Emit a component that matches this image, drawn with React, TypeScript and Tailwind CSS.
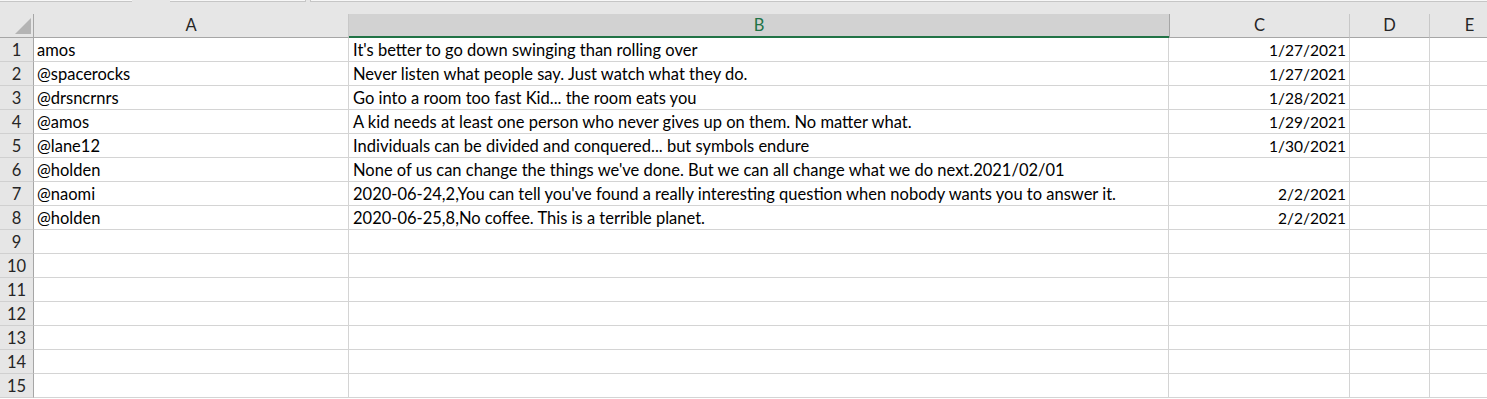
import React from "react";

const rows: { a: string; b: string; c: string }[] = [
  { a: "amos", b: "It's better to go down swinging than rolling over", c: "1/27/2021" },
  { a: "@spacerocks", b: "Never listen what people say. Just watch what they do.", c: "1/27/2021" },
  { a: "@drsncrnrs", b: "Go into a room too fast Kid... the room eats you", c: "1/28/2021" },
  { a: "@amos", b: "A kid needs at least one person who never gives up on them. No matter what.", c: "1/29/2021" },
  { a: "@lane12", b: "Individuals can be divided and conquered... but symbols endure", c: "1/30/2021" },
  { a: "@holden", b: "None of us can change the things we've done. But we can all change what we do next.2021/02/01", c: "" },
  { a: "@naomi", b: "2020-06-24,2,You can tell you've found a really interesting question when nobody wants you to answer it.", c: "2/2/2021" },
  { a: "@holden", b: "2020-06-25,8,No coffee. This is a terrible planet.", c: "2/2/2021" },
];

const allRows = Array.from({ length: 15 }, (_, i) => rows[i] ?? { a: "", b: "", c: "" });

export default function App() {
  return (
    <div
      className="w-[1487px] h-[399px] overflow-hidden bg-white text-[15px] text-black"
      style={{ fontFamily: "Lato, 'Liberation Sans', sans-serif" }}
    >
      {/* top strip */}
      <div className="flex h-[2px] bg-[#e6e6e6]">
        <div className="w-[132px] h-[2px] bg-[#f7f7f7] border-b border-[#c6c6c6]" />
        <div className="w-[38px] h-[2px]" />
        <div className="w-[136px] h-[2px] bg-[#f7f7f7] border-b border-r border-[#c6c6c6]" />
        <div className="w-[4px] h-[2px]" />
        <div className="flex-1 h-[2px] bg-[#f7f7f7] border-b border-l border-[#c6c6c6]" />
      </div>
      {/* header area */}
      <div className="bg-[#e6e6e6]">
        <div className="h-[12px]" />
        <div className="flex h-[24px] text-[16.5px]">
          <div className="w-[34px] shrink-0 h-[24px] border-r border-b border-[#a6a6a6] relative">
            <svg width="34" height="24" className="absolute left-0 top-0" viewBox="0 0 34 24">
              <polygon points="31,4 31,20 15,20" fill="#b4b4b4" />
            </svg>
          </div>
          <div className="w-[315px] shrink-0 h-[24px] border-r border-b border-[#a6a6a6] border-r-[#c8c8c8] flex items-center justify-center text-[#262626]">
            A
          </div>
          <div className="w-[820px] shrink-0 h-[24px] bg-[#d2d2d2] border-b-2 border-[#217346] flex items-center justify-center text-[#217346]">
            B
          </div>
          <div className="w-[181px] shrink-0 h-[24px] border-l border-r border-b border-[#a6a6a6] border-l-[#a6a6a6] border-r-[#c8c8c8] flex items-center justify-center text-[#262626]">
            C
          </div>
          <div className="w-[80px] shrink-0 h-[24px] border-r border-b border-[#a6a6a6] border-r-[#c8c8c8] flex items-center justify-center text-[#262626]">
            D
          </div>
          <div className="w-[80px] shrink-0 h-[24px] border-r border-b border-[#a6a6a6] border-r-[#c8c8c8] flex items-center justify-center text-[#262626]">
            E
          </div>
        </div>
      </div>
      {/* body rows */}
      {allRows.map((r, i) => (
        <div key={i} className="flex h-[24px] text-[16.5px] leading-[20px]">
          <div className="w-[34px] shrink-0 h-[24px] bg-[#e6e6e6] border-r border-b border-[#d0d0d0] border-r-[#a6a6a6] flex items-end justify-center pb-[1px] text-[16.5px] text-[#262626]">
            {i + 1}
          </div>
          <div className="w-[315px] shrink-0 h-[24px] border-r border-b border-[#d4d4d4] flex items-end pl-[3px] pb-[1px] whitespace-nowrap">
            {r.a}
          </div>
          <div className="w-[820px] shrink-0 h-[24px] border-r border-b border-[#d4d4d4] flex items-end pl-[4px] pb-[1px] whitespace-nowrap">
            {r.b}
          </div>
          <div className="w-[181px] shrink-0 h-[24px] border-r border-b border-[#d4d4d4] flex items-end justify-end pr-[3px] pb-[1px] whitespace-nowrap text-[15.5px]">
            {r.c}
          </div>
          <div className="w-[80px] shrink-0 h-[24px] border-r border-b border-[#d4d4d4]" />
          <div className="w-[80px] shrink-0 h-[24px] border-r border-b border-[#d4d4d4]" />
        </div>
      ))}
    </div>
  );
}
